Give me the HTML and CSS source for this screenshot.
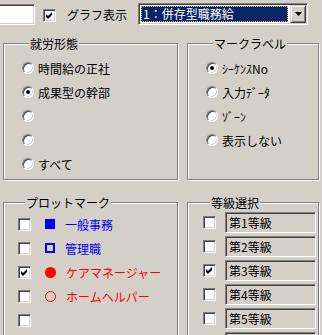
FILE: index.html
```html
<!DOCTYPE html>
<html lang="ja">
<head>
    <meta charset="UTF-8">
    <meta name="viewport" content="width=device-width, initial-scale=1.0">
    <title>グラフ設定</title>
    <link rel="stylesheet" href="styles.css">
</head>
<body>
    <div class="topbar">
        <input class="textbox" type="text">
        <span class="check checked">
            <svg viewBox="0 0 9 9" width="9" height="9"><path d="M1 3 L3 5 L7 1 L7 4 L3 8 L1 6 Z" fill="#000"/></svg>
        </span>
        <span class="caption">グラフ表示</span>
        <div class="combo">
            <span class="combo-text"><span class="combo-sel">1：併存型職務給</span></span>
            <span class="combo-btn">
                <svg viewBox="0 0 7 4" width="7" height="4"><path d="M0 0 H7 L3.5 4 Z" fill="#000"/></svg>
            </span>
        </div>
    </div>

    <div class="panels">
        <fieldset class="group">
            <legend>就労形態</legend>
            <div class="row"><span class="radio"></span><span>時間給の正社</span></div>
            <div class="row"><span class="radio on"></span><span>成果型の幹部</span></div>
            <div class="row"><span class="radio"></span></div>
            <div class="row"><span class="radio"></span></div>
            <div class="row"><span class="radio"></span><span>すべて</span></div>
        </fieldset>

        <fieldset class="group">
            <legend>マークラベル</legend>
            <div class="row"><span class="radio on"></span><span>ｼｰｹﾝｽNo</span></div>
            <div class="row"><span class="radio"></span><span>入力ﾃﾞｰﾀ</span></div>
            <div class="row"><span class="radio"></span><span>ｿﾞｰﾝ</span></div>
            <div class="row"><span class="radio"></span><span>表示しない</span></div>
        </fieldset>

        <fieldset class="group low plot">
            <legend>プロットマーク</legend>
            <div class="row blue"><span class="check"></span><span class="mark sq-fill"></span><span>一般事務</span></div>
            <div class="row blue"><span class="check"></span><span class="mark sq"></span><span>管理職</span></div>
            <div class="row red">
                <span class="check checked"><svg viewBox="0 0 9 9" width="9" height="9"><path d="M1 3 L3 5 L7 1 L7 4 L3 8 L1 6 Z" fill="#000"/></svg></span>
                <span class="mark dot-fill"></span><span>ケアマネージャー</span>
            </div>
            <div class="row red"><span class="check"></span><span class="mark dot"></span><span>ホームヘルパー</span></div>
            <div class="row"><span class="check"></span></div>
        </fieldset>

        <fieldset class="group low grade">
            <legend>等級選択</legend>
            <div class="row"><span class="check"></span><span class="gradebox">第1等級</span></div>
            <div class="row"><span class="check"></span><span class="gradebox">第2等級</span></div>
            <div class="row">
                <span class="check checked"><svg viewBox="0 0 9 9" width="9" height="9"><path d="M1 3 L3 5 L7 1 L7 4 L3 8 L1 6 Z" fill="#000"/></svg></span>
                <span class="gradebox">第3等級</span>
            </div>
            <div class="row"><span class="check"></span><span class="gradebox">第4等級</span></div>
            <div class="row"><span class="check"></span><span class="gradebox">第5等級</span></div>
            <div class="row"><span class="check"></span><span class="gradebox"></span></div>
        </fieldset>
    </div>
</body>
</html>
```

FILE: styles.css
```css
body {
    font-family: "Noto Sans CJK JP", "Noto Sans", sans-serif;
    font-size: 12px;
    color: #000;
    background-color: #d4d0c8;
    margin: 0;
    padding: 0;
    overflow: hidden;
}
.topbar {
    display: flex;
    align-items: flex-start;
    height: 37px;
}
.textbox {
    box-sizing: border-box;
    width: 45px;
    height: 21px;
    margin: 4px 0 0 -10px;
    padding: 0;
    background-color: #fff;
    border: 1px solid;
    border-color: #808080 #fff #fff #808080;
    box-shadow: inset 1px 1px #404040, inset -1px -1px #d4d0c8;
}
.check {
    box-sizing: border-box;
    display: inline-flex;
    align-items: center;
    justify-content: center;
    flex: none;
    width: 13px;
    height: 13px;
    background-color: #fff;
    border: 1px solid;
    border-color: #808080 #fff #fff #808080;
    box-shadow: inset 1px 1px #404040, inset -1px -1px #d4d0c8;
}
.check svg {
    display: block;
}
.topbar .check {
    margin: 9px 0 0 8px;
}
.caption {
    margin: 7px 0 0 11px;
    line-height: 16px;
}
.combo {
    box-sizing: border-box;
    display: flex;
    width: 170px;
    height: 22px;
    margin: 3px 0 0 11px;
    padding: 1px;
    background-color: #fff;
    border: 1px solid;
    border-color: #808080 #fff #fff #808080;
    box-shadow: inset 1px 1px #404040, inset -1px -1px #d4d0c8;
}
.combo-text {
    flex: 1;
    display: flex;
    padding: 1px 2px 1px 1px;
}
.combo-sel {
    flex: 1;
    padding-left: 2px;
    line-height: 16px;
    color: #fff;
    background-color: #0a246a;
    outline: 1px dotted #d8c870;
    outline-offset: -1px;
    white-space: nowrap;
}
.combo-btn {
    box-sizing: border-box;
    display: flex;
    align-items: center;
    justify-content: center;
    width: 16px;
    background-color: #d4d0c8;
    border: 1px solid;
    border-color: #d4d0c8 #404040 #404040 #d4d0c8;
    box-shadow: inset 1px 1px #fff, inset -1px -1px #808080;
}
.panels {
    display: grid;
    grid-template-columns: 175px 132px;
    column-gap: 9px;
    row-gap: 16px;
    padding-left: 3px;
}
.group {
    margin: 0;
    padding: 6px 0 0 18px;
    min-width: 0;
    height: 143px;
    box-sizing: border-box;
    border: 1px solid #808080;
    box-shadow: inset 1px 1px #fff, 1px 1px #fff;
}
.group legend {
    margin-left: 7px;
    padding: 0 1px;
    line-height: 13px;
    background-color: #d4d0c8;
}
.group.low {
    height: 160px;
}
.row {
    display: flex;
    align-items: center;
    height: 24px;
    white-space: nowrap;
}
.radio {
    box-sizing: border-box;
    position: relative;
    flex: none;
    width: 12px;
    height: 12px;
    margin-right: 4px;
    border-radius: 50%;
    background-color: #fff;
    border: 1px solid;
    border-color: #808080 #fff #fff #808080;
    box-shadow: inset 1px 1px #404040, inset -1px -1px #d4d0c8;
}
.radio.on::after {
    content: "";
    position: absolute;
    left: 3px;
    top: 3px;
    width: 4px;
    height: 4px;
    border-radius: 50%;
    background-color: #000;
}
.plot {
    padding: 3px 0 0 14px;
}
.plot .check {
    margin-right: 14px;
}
.mark {
    box-sizing: border-box;
    flex: none;
    width: 10px;
    height: 10px;
    margin-right: 10px;
}
.blue {
    color: #0000ff;
}
.red {
    color: #ff0000;
}
.sq-fill {
    background-color: #0000ff;
}
.sq {
    border: 2px solid #0000ff;
}
.dot-fill {
    width: 11px;
    height: 11px;
    border-radius: 50%;
    background-color: #ff0000;
}
.dot {
    width: 11px;
    height: 11px;
    border-radius: 50%;
    border: 1px solid #ff0000;
}
.grade {
    padding: 1px 0 0 15px;
}
.grade .check {
    margin-right: 9px;
}
.gradebox {
    box-sizing: border-box;
    width: 91px;
    height: 21px;
    padding-left: 3px;
    line-height: 19px;
    border: 1px solid;
    border-color: #808080 #fff #fff #808080;
    box-shadow: inset 1px 1px #404040, inset -1px -1px #d4d0c8;
}
```
